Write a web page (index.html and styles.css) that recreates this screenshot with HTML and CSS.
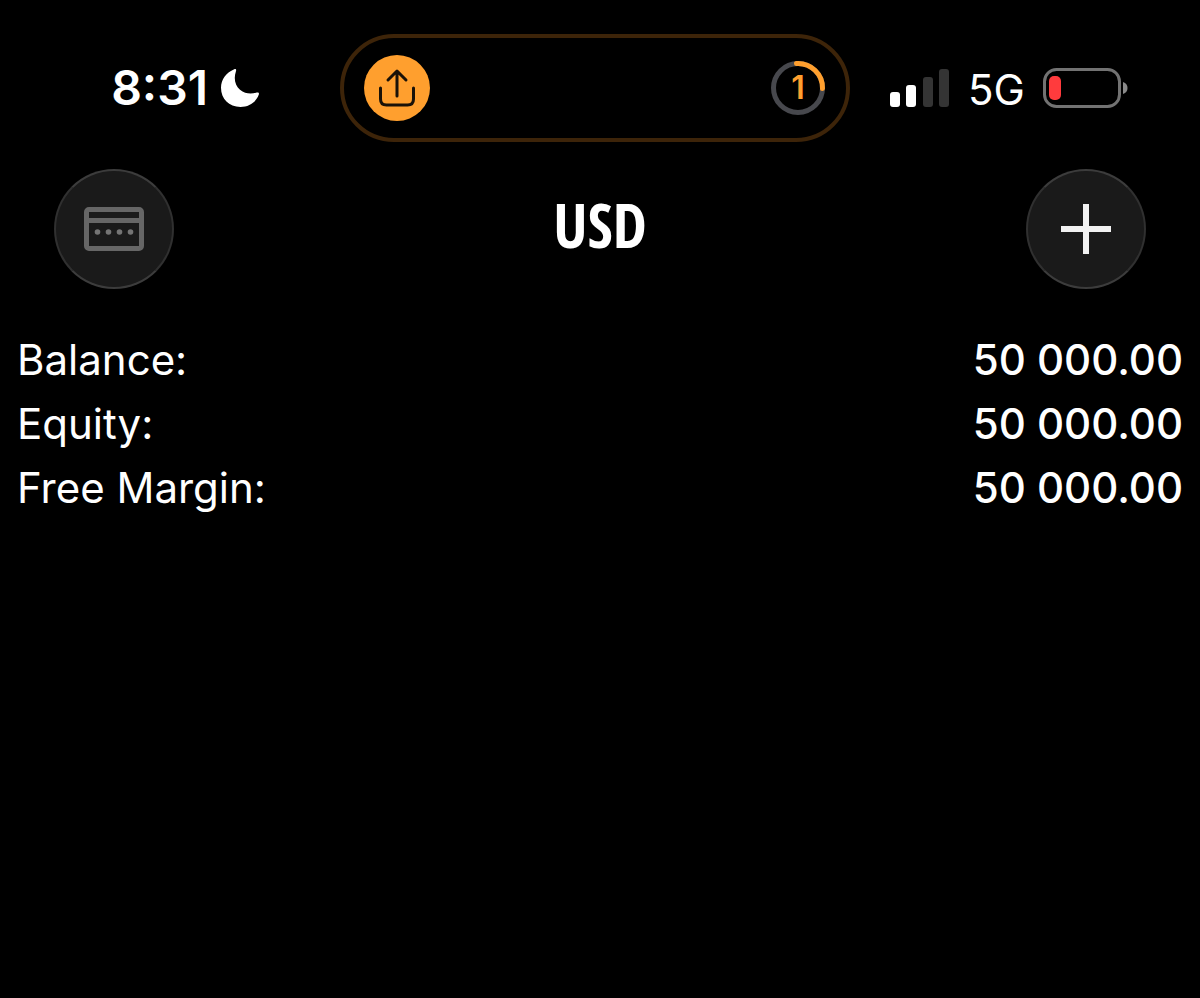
FILE: index.html
```
<!DOCTYPE html>
<html lang="en">
<head>
    <meta charset="UTF-8">
    <meta name="viewport" content="width=device-width, initial-scale=1.0">
    <title>USD</title>
    <link rel="stylesheet" href="styles.css">
</head>
<body>
    <div class="status-bar">
        <div class="status-left">
            <span class="clock">8:31</span>
            <svg class="moon" viewBox="0 0 40 40" aria-hidden="true">
                <path d="M14.2 1.2 C15.6 0.4 16.6 1.4 16 3 C13.2 11.500 15.500 18 20 21.800 C25 26 31 26.300 36 24.800 C38.400 24 39.400 25 38.800 26.600 C36 34.500 29 39 20.500 39 C9 39 1 31 1 19.800 C1 11 6.500 4.500 14.200 1.200 Z" fill="#fff"/>
            </svg>
        </div>

        <div class="island">
            <svg class="share" viewBox="0 0 66 66" aria-hidden="true">
                <circle cx="33" cy="33" r="33" fill="#ff9f2e"/>
                <g fill="none" stroke="#1a1208" stroke-width="3" stroke-linecap="round" stroke-linejoin="round">
                    <path d="M33 41 V17 M24 25 L33 16 L42 25"/>
                    <path d="M16.500 33 V44 Q16.500 50 22.500 50 H43.500 Q49.500 50 49.500 44 V33"/>
                </g>
            </svg>
            <div class="counter">
                <svg viewBox="0 0 56 56" aria-hidden="true">
                    <circle cx="28" cy="28" r="24.500" fill="none" stroke="#47484d" stroke-width="5"/>
                    <path d="M26.500 3.500 A24.500 24.500 0 0 1 52.500 28.500" fill="none" stroke="#ff9f2e" stroke-width="5" stroke-linecap="round"/>
                </svg>
                <span class="counter-value">1</span>
            </div>
        </div>

        <div class="status-right">
            <svg class="signal" viewBox="0 0 60 38" aria-hidden="true">
                <rect x="0" y="23" width="10" height="15" rx="3" fill="#fff"/>
                <rect x="16" y="16" width="10" height="22" rx="3" fill="#fff"/>
                <rect x="33" y="8" width="10" height="30" rx="3" fill="#343434"/>
                <rect x="49" y="0" width="10" height="38" rx="3" fill="#343434"/>
            </svg>
            <span class="network">5G</span>
            <svg class="battery" viewBox="0 0 86 40" aria-hidden="true">
                <rect x="1.500" y="1.500" width="75" height="37" rx="12" fill="none" stroke="#727272" stroke-width="3"/>
                <rect x="6" y="8" width="12" height="24" rx="5" fill="#ff3b3d"/>
                <path d="M80 14 Q84.500 15.500 84.500 20 Q84.500 24.500 80 26 Z" fill="#8a8a8a"/>
            </svg>
        </div>
    </div>

    <header class="toolbar">
        <button class="round-btn" type="button" aria-label="Accounts">
            <svg viewBox="0 0 60 44" class="card-icon" aria-hidden="true">
                <rect x="2.500" y="2.500" width="55" height="39" rx="2.500" fill="none" stroke="#666" stroke-width="5"/>
                <path d="M3 13.500 H57" stroke="#666" stroke-width="5"/>
                <g fill="#747474">
                    <circle cx="13.500" cy="25" r="2.800"/>
                    <circle cx="24.500" cy="25" r="2.800"/>
                    <circle cx="35.500" cy="25" r="2.800"/>
                    <circle cx="46.500" cy="25" r="2.800"/>
                </g>
            </svg>
        </button>
        <h1>USD</h1>
        <button class="round-btn" type="button" aria-label="Add">
            <svg viewBox="0 0 50 50" class="plus-icon" aria-hidden="true">
                <path d="M25 0 V50 M0 25 H50" stroke="#f2f2f2" stroke-width="6"/>
            </svg>
        </button>
    </header>

    <main>
        <dl class="summary">
            <div class="summary-item">
                <dt>Balance:</dt>
                <dd>50 000.00</dd>
            </div>
            <div class="summary-item">
                <dt>Equity:</dt>
                <dd>50 000.00</dd>
            </div>
            <div class="summary-item">
                <dt>Free Margin:</dt>
                <dd>50 000.00</dd>
            </div>
        </dl>
    </main>
</body>
</html>
```
FILE: styles.css
```
* {
    margin: 0;
    padding: 0;
    box-sizing: border-box;
}

body {
    background-color: #000;
    color: #fff;
    font-family: Inter, 'Liberation Sans', sans-serif;
}

.status-bar {
    display: grid;
    grid-template-columns: 1fr 510px 1fr;
    align-items: center;
    padding: 34px 10px 0 0;
}

.status-left {
    display: flex;
    align-items: center;
    justify-content: flex-end;
    gap: 12px;
    padding-right: 80px;
}

.clock {
    font-size: 48px;
    font-weight: 600;
    line-height: 56px;
}

.moon {
    width: 40px;
    height: 40px;
}

.island {
    display: flex;
    align-items: center;
    justify-content: space-between;
    height: 108px;
    padding: 0 20px;
    border: 4px solid #3d2409;
    border-radius: 56px;
}

.share {
    width: 66px;
    height: 66px;
}

.counter {
    display: grid;
    place-items: center;
    width: 56px;
    height: 56px;
}

.counter svg,
.counter-value {
    grid-area: 1 / 1;
}

.counter-value {
    color: #ff9f2e;
    font-size: 32px;
    font-weight: 600;
    line-height: 40px;
}

.status-right {
    display: flex;
    align-items: center;
    gap: 18px;
    padding-left: 40px;
}

.signal {
    width: 60px;
    height: 38px;
}

.network {
    padding-top: 4px;
    font-size: 42px;
    font-weight: 400;
    line-height: 48px;
}

.battery {
    width: 86px;
    height: 40px;
}

.toolbar {
    display: flex;
    align-items: center;
    justify-content: space-between;
    padding: 27px 54px 0;
}

.toolbar h1 {
    padding-bottom: 8px;
    font-family: 'Liberation Sans Narrow', 'Open Sans Condensed', 'Open Sans', sans-serif;
    font-size: 61px;
    font-weight: 700;
    line-height: 64px;
}

.round-btn {
    display: flex;
    align-items: center;
    justify-content: center;
    width: 120px;
    height: 120px;
    background-color: #1a1a1a;
    border: 2px solid #303030;
    border-top-color: #3c3c3c;
    border-bottom-color: #3c3c3c;
    border-radius: 50%;
    cursor: pointer;
}

.card-icon {
    width: 60px;
    height: 44px;
}

.plus-icon {
    width: 50px;
    height: 50px;
}

.summary {
    padding: 39px 17px;
}

.summary-item {
    display: flex;
    justify-content: space-between;
    font-size: 42px;
    line-height: 64px;
}

.summary-item dd {
    font-weight: 500;
}
```
